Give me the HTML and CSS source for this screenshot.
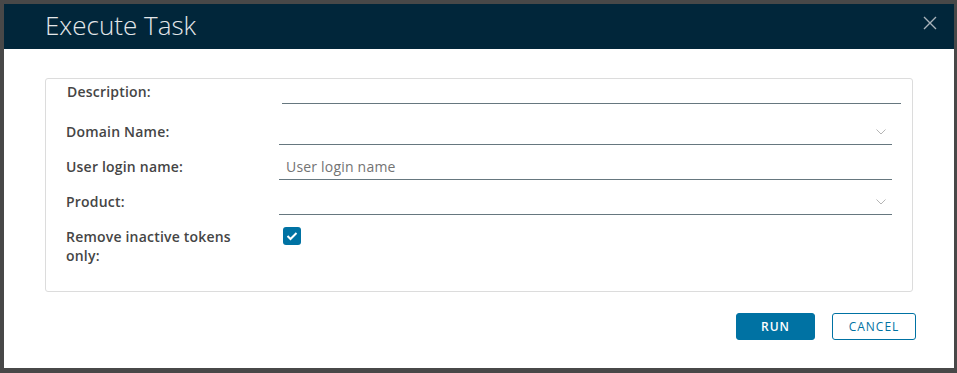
FILE: index.html
```html
<!DOCTYPE html>
<html>
    <head>
        <title>Execute Task</title>
        <meta charset="UTF-8">
        <meta name="viewport" content="width=device-width, initial-scale=1.0">
        <link rel="stylesheet" href="styles.css">
    </head>
    <body>
        <div class="backdrop">
            <div class="modal">
                <div class="modal-header">
                    <h1>Execute Task</h1>
                    <button class="close-btn" aria-label="Close">
                        <svg width="14" height="14" viewBox="0 0 14 14">
                            <path d="M1 1 L13 13 M13 1 L1 13" stroke="#a9b3ba" stroke-width="1.4" fill="none"/>
                        </svg>
                    </button>
                </div>

                <div class="modal-body">
                    <div class="form-box">
                        <div class="form-row desc-row">
                            <label>Description:</label>
                            <input type="text" class="field">
                        </div>
                        <div class="form-row">
                            <label>Domain Name:</label>
                            <div class="select">
                                <svg class="chevron" width="10" height="6" viewBox="0 0 10 6">
                                    <path d="M0.5 0.5 L5 5 L9.5 0.5" stroke="#b5b5b5" stroke-width="1" fill="none"/>
                                </svg>
                            </div>
                        </div>
                        <div class="form-row">
                            <label>User login name:</label>
                            <input type="text" class="field" placeholder="User login name">
                        </div>
                        <div class="form-row">
                            <label>Product:</label>
                            <div class="select">
                                <svg class="chevron" width="10" height="6" viewBox="0 0 10 6">
                                    <path d="M0.5 0.5 L5 5 L9.5 0.5" stroke="#b5b5b5" stroke-width="1" fill="none"/>
                                </svg>
                            </div>
                        </div>
                        <div class="form-row check-row">
                            <label>Remove inactive tokens<br>only:</label>
                            <div class="checkbox">
                                <svg width="12" height="10" viewBox="0 0 12 10">
                                    <path d="M1.5 5 L4.5 8 L10.5 2" stroke="#fff" stroke-width="2" fill="none"/>
                                </svg>
                            </div>
                        </div>
                    </div>

                    <div class="modal-footer">
                        <button class="btn btn-primary">RUN</button>
                        <button class="btn btn-outline">CANCEL</button>
                    </div>
                </div>
            </div>
        </div>
    </body>
</html>
```

FILE: styles.css
```css
* {
    box-sizing: border-box;
    margin: 0;
    padding: 0;
}

body {
    background: #484848;
    font-family: 'Open Sans', sans-serif;
    color: #313131;
    height: 373px;
    overflow: hidden;
}

.backdrop {
    padding: 4px 3px 5px 4px;
}

.modal {
    width: 950px;
    height: 364px;
    background: #fff;
    display: flex;
    flex-direction: column;
}

.modal-header {
    height: 45px;
    background: #01263a;
    display: flex;
    align-items: center;
    justify-content: space-between;
    padding: 0 17px 0 41px;
}

.modal-header h1 {
    font-size: 26px;
    font-weight: 300;
    color: #e4e7e9;
    margin-top: -3px;
}

.close-btn {
    background: none;
    border: none;
    width: 14px;
    height: 14px;
    display: flex;
    margin-top: -8px;
}

.modal-body {
    padding: 29px 37px 0 41px;
}

.form-box {
    border: 1px solid #dcdcdc;
    border-radius: 3px;
    width: 868px;
    height: 214px;
    padding: 0 20px 0 20px;
}

.form-row {
    display: grid;
    grid-template-columns: 213px 613px;
    align-items: center;
    height: 27px;
    margin-top: 8px;
}

.form-row label {
    font-size: 14px;
    font-weight: 600;
    letter-spacing: 0.2px;
    line-height: 19px;
    color: #454545;
}

.desc-row {
    grid-template-columns: 215px 619px;
    height: 25px;
    margin-top: 0;
    padding-left: 1px;
}

.desc-row + .form-row {
    margin-top: 14px;
}

.field,
.select {
    height: 100%;
    border: none;
    border-bottom: 1px solid #66777f;
    outline: none;
    background: transparent;
    font-family: 'Open Sans', sans-serif;
    font-size: 14px;
    letter-spacing: 0.2px;
    color: #313131;
    padding: 0 7px;
}

.desc-row .field {
    height: 25px;
}

.field::placeholder {
    color: #737373;
}

.select {
    display: flex;
    align-items: center;
    justify-content: flex-end;
    padding-right: 6px;
}

.chevron {
    margin-bottom: -1px;
}

.check-row {
    align-items: start;
    height: 38px;
    margin-top: 12px;
}

.checkbox {
    width: 18px;
    height: 18px;
    margin-left: 4px;
    background: #0072a3;
    border-radius: 3px;
    display: flex;
    align-items: center;
    justify-content: center;
}

.modal-footer {
    display: flex;
    justify-content: flex-end;
    gap: 17px;
    margin-top: 21px;
    padding-right: 1px;
}

.btn {
    height: 27px;
    border-radius: 3px;
    font-family: 'Open Sans', sans-serif;
    font-size: 12px;
    font-weight: 600;
    letter-spacing: 1px;
    cursor: pointer;
}

.btn-primary {
    width: 79px;
    background: #0072a3;
    border: 1px solid #0072a3;
    color: #fff;
}

.btn-outline {
    width: 84px;
    background: #fff;
    border: 1px solid #0072a3;
    color: #0072a3;
    font-weight: 400;
}
```
